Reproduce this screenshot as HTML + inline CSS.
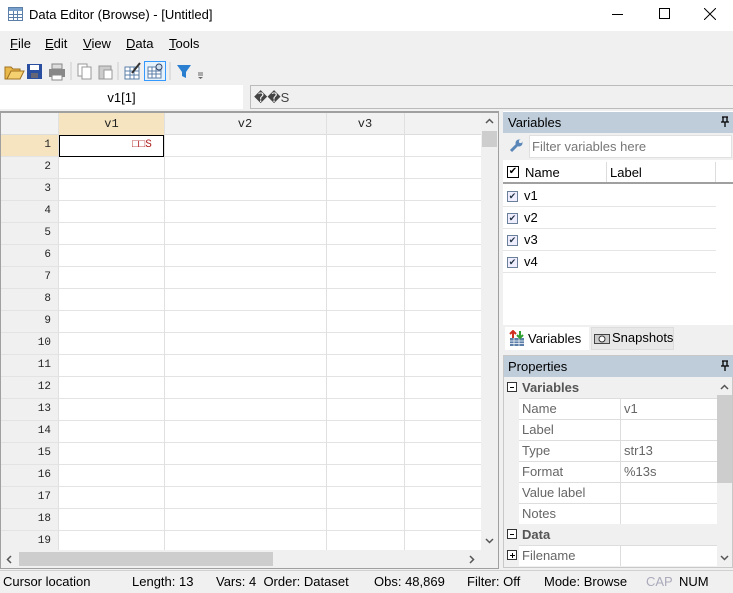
<!DOCTYPE html>
<html><head><style>
*{margin:0;padding:0;box-sizing:border-box}
body{width:733px;height:593px;background:#f0f0f0;font-family:"Liberation Sans","Noto Sans CJK SC",sans-serif;font-size:13px;color:#000;position:relative;overflow:hidden}
.a{position:absolute}
.mono{font-family:"Liberation Mono",monospace;font-size:12px}
</style></head><body>
<div class="a" style="left:0;top:0;width:733px;height:31px;background:#fff"></div>
<svg class="a" style="left:8px;top:7px" width="16" height="15"><rect x="0.5" y="0.5" width="14" height="13" fill="#fff" stroke="#5b7fa8"/><rect x="1" y="1" width="13" height="3" fill="#7aa0cc"/><path d="M1 7.5H14M1 10.5H14M5.5 4V14M9.5 4V14" stroke="#5b7fa8"/></svg>
<div class="a" style="left:29px;top:7px;font-size:13px">Data Editor (Browse) - [Untitled]</div>
<div class="a" style="left:612px;top:14px;width:11px;height:1px;background:#000"></div>
<div class="a" style="left:659px;top:8px;width:11px;height:11px;border:1px solid #000"></div>
<svg class="a" style="left:704px;top:8px" width="12" height="12"><path d="M0 0L12 12M12 0L0 12" stroke="#000"/></svg>
<div class="a" style="left:10px;top:36px"><u>F</u>ile</div>
<div class="a" style="left:45px;top:36px"><u>E</u>dit</div>
<div class="a" style="left:83px;top:36px"><u>V</u>iew</div>
<div class="a" style="left:126px;top:36px"><u>D</u>ata</div>
<div class="a" style="left:169px;top:36px"><u>T</u>ools</div>
<svg class="a" style="left:4px;top:61px" width="210" height="20">
<path d="M1 6h6l2 2h7v10H1z" fill="#e8b84a" stroke="#a07020"/><path d="M3 18l4-8h13l-4 8z" fill="#f5d070" stroke="#a07020"/>
<rect x="23" y="3" width="15" height="15" fill="#2a4fa0"/><rect x="26" y="4" width="9" height="5" fill="#fff"/><rect x="27" y="12" width="7" height="5" fill="#667"/>
<rect x="45" y="8" width="16" height="8" fill="#888"/><rect x="48" y="3" width="10" height="5" fill="#ddd" stroke="#888"/><rect x="48" y="14" width="10" height="5" fill="#fff" stroke="#888"/>
<path d="M67 1v18" stroke="#ccc"/>
<rect x="74" y="3" width="9" height="12" fill="#fff" stroke="#999"/><rect x="78" y="6" width="9" height="12" fill="#fff" stroke="#999"/>
<rect x="95" y="5" width="12" height="13" fill="#ccc" stroke="#999"/><rect x="100" y="9" width="8" height="9" fill="#fff" stroke="#999"/>
<path d="M114 1v18" stroke="#ccc"/>
<rect x="121" y="6" width="14" height="12" fill="#fff" stroke="#5b7fa8"/><path d="M121 10h14M121 14h14M126 6v12M130 6v12" stroke="#5b7fa8"/><path d="M128 12l8-10" stroke="#333" stroke-width="2"/>
<rect x="140.5" y="0.5" width="21" height="19" fill="#e5f1fb" stroke="#3399ff"/><rect x="144" y="6" width="13" height="11" fill="#fff" stroke="#5b7fa8"/><path d="M144 10h13M144 13h13M148 6v11M152 6v11" stroke="#5b7fa8"/><circle cx="155" cy="6" r="3" fill="#cde" stroke="#346"/>
<path d="M166 1v18" stroke="#ccc"/>
<path d="M173 4h14l-5 7v6l-4-2v-4z" fill="#2b7fd0"/>
<path d="M194 12h5M194 14h5" stroke="#666"/><path d="M194 16l2.5 2 2.5-2" fill="#666"/>
</svg>
<div class="a" style="left:0;top:85px;width:243px;height:24px;background:#fff"></div>
<div class="a" style="left:0;top:90px;width:243px;text-align:center">v1[1]</div>
<div class="a" style="left:250px;top:85px;width:483px;height:24px;background:#f0f0f0;border:1px solid #bbb;border-right:none"></div>
<div class="a" style="left:254px;top:90px;color:#444">��S</div>
<div class="a" style="left:0;top:111px;width:499px;height:458px;border:1px solid #a0a0a0;border-top:2px solid #a0a0a0;background:#fff"></div>
<div class="a" style="left:1px;top:113px;width:480px;height:22px;background:#f2f2f2;border-bottom:1px solid #ddd"></div>
<div class="a" style="left:59px;top:113px;width:105px;height:22px;background:#f6e4c0"></div>
<div class="a" style="left:1px;top:135px;width:57px;height:415px;background:#f0f0f0"></div>
<div class="a" style="left:1px;top:135px;width:57px;height:22px;background:#f6e4c0"></div>
<div id="g"></div>
<div class="a mono" style="left:59px;top:117px;width:105px;text-align:center;color:#222">v1</div>
<div class="a mono" style="left:164px;top:117px;width:162px;text-align:center;color:#222">v2</div>
<div class="a mono" style="left:326px;top:117px;width:78px;text-align:center;color:#222">v3</div>
<div class="a" style="left:59px;top:135px;width:105px;height:22px;border:1px solid #000"></div>
<div class="a mono" style="left:132px;top:139px;color:#b02020;font-size:11px">□□S</div>
<div class="a" style="left:481px;top:113px;width:17px;height:437px;background:#f0f0f0"></div>
<div class="a" style="left:482px;top:131px;width:15px;height:16px;background:#cdcdcd"></div>
<svg class="a" style="left:485px;top:118px" width="9" height="6"><path d="M1 5l3.5-3.5L8 5" stroke="#555" stroke-width="1.5" fill="none"/></svg>
<svg class="a" style="left:485px;top:538px" width="9" height="6"><path d="M1 1l3.5 3.5L8 1" stroke="#555" stroke-width="1.5" fill="none"/></svg>
<div class="a" style="left:1px;top:550px;width:497px;height:18px;background:#f0f0f0"></div>
<div class="a" style="left:19px;top:552px;width:254px;height:14px;background:#cdcdcd"></div>
<svg class="a" style="left:6px;top:555px" width="6" height="9"><path d="M5 1L1.5 4.5 5 8" stroke="#555" stroke-width="1.5" fill="none"/></svg>
<svg class="a" style="left:469px;top:555px" width="6" height="9"><path d="M1 1l3.5 3.5L1 8" stroke="#555" stroke-width="1.5" fill="none"/></svg>
<div class="a" style="left:503px;top:111px;width:230px;height:240px;background:#fff"></div>
<div class="a" style="left:503px;top:112px;width:230px;height:21px;background:#bfcddb"></div>
<div class="a" style="left:508px;top:115px">Variables</div>
<svg class="a" style="left:721px;top:116px" width="8" height="11"><path d="M1 1h6M2 1v5M6 1v5M0 6h8M4 6v5" stroke="#000" stroke-width="1.3" fill="none"/></svg>
<div class="a" style="left:503px;top:133px;width:230px;height:27px;background:#f0f0f0"></div>
<svg class="a" style="left:509px;top:139px" width="14" height="14"><path d="M2 12l6-6" stroke="#5a86b8" stroke-width="3"/><circle cx="10" cy="4" r="3.5" fill="#5a86b8"/><circle cx="11.5" cy="2.5" r="1.6" fill="#f0f0f0"/></svg>
<div class="a" style="left:529px;top:135px;width:203px;height:23px;background:#fff;border:1px solid #e0e0e0"></div>
<div class="a" style="left:532px;top:139px;color:#777">Filter variables here</div>
<div class="a" style="left:503px;top:161px;width:230px;height:23px;background:#fff;border-bottom:2px solid #a0a0a0"></div>
<div class="a" style="left:606px;top:162px;width:1px;height:20px;background:#ddd"></div>
<div class="a" style="left:715px;top:162px;width:1px;height:20px;background:#ddd"></div>
<div class="a" style="left:507px;top:166px;width:12px;height:12px;border:1px solid #000;font-size:10px;line-height:10px;text-align:center">&#10004;</div>
<div class="a" style="left:525px;top:165px">Name</div>
<div class="a" style="left:610px;top:165px">Label</div>
<div id="vr"></div>
<div class="a" style="left:503px;top:325px;width:230px;height:28px;background:#f0f0f0"></div>
<div class="a" style="left:505px;top:327px;width:84px;height:23px;background:#fff"></div>
<svg class="a" style="left:509px;top:330px" width="16" height="16"><rect x="1" y="8" width="14" height="8" fill="#5b7fa8"/><path d="M1 11h14M1 13.5h14M5 8v8M10 8v8" stroke="#fff" stroke-width=".7"/><path d="M4 8V2M1 4l3-3 3 3" stroke="#d03020" stroke-width="2" fill="none"/><path d="M11 1v6M8 5l3 3 3-3" stroke="#30a030" stroke-width="2" fill="none"/></svg>
<div class="a" style="left:528px;top:331px">Variables</div>
<div class="a" style="left:591px;top:327px;width:83px;height:23px;background:#e8e8e8;border:1px solid #ddd"></div>
<svg class="a" style="left:594px;top:332px" width="16" height="12"><rect x="0.5" y="2.5" width="15" height="9" fill="#ccc" stroke="#444"/><circle cx="8" cy="7" r="3" fill="#fff" stroke="#333"/></svg>
<div class="a" style="left:612px;top:330px">Snapshots</div>
<div class="a" style="left:503px;top:355px;width:230px;height:213px;background:#f0f0f0;border:1px solid #c8c8c8"></div>
<div class="a" style="left:504px;top:356px;width:229px;height:21px;background:#bfcddb"></div>
<div class="a" style="left:508px;top:359px">Properties</div>
<svg class="a" style="left:721px;top:360px" width="8" height="11"><path d="M1 1h6M2 1v5M6 1v5M0 6h8M4 6v5" stroke="#000" stroke-width="1.3" fill="none"/></svg>
<div class="a" style="left:507px;top:382px;width:10px;height:10px;border:1px solid #333;background:#fff"><div class="a" style="left:2px;top:3.5px;width:4px;height:1px;background:#000"></div></div>
<div class="a" style="left:522px;top:380px;font-weight:bold;color:#555">Variables</div>
<div id="pr"></div>
<div class="a" style="left:507px;top:529px;width:10px;height:10px;border:1px solid #333;background:#fff"><div class="a" style="left:2px;top:3.5px;width:4px;height:1px;background:#000"></div></div>
<div class="a" style="left:522px;top:527px;font-weight:bold;color:#555">Data</div>
<div class="a" style="left:507px;top:550px;width:10px;height:10px;border:1px solid #333;background:#fff"><div class="a" style="left:2px;top:3.5px;width:5px;height:1px;background:#000"></div><div class="a" style="left:4px;top:1.5px;width:1px;height:5px;background:#000"></div></div>
<div class="a" style="left:519px;top:545px;width:198px;height:21px;background:#fff;border-top:1px solid #ddd"></div>
<div class="a" style="left:620px;top:545px;width:1px;height:21px;background:#ddd"></div>
<div class="a" style="left:522px;top:548px;color:#666">Filename</div>
<div class="a" style="left:717px;top:377px;width:15px;height:190px;background:#f0f0f0"></div>
<div class="a" style="left:717px;top:395px;width:15px;height:88px;background:#cdcdcd"></div>
<svg class="a" style="left:720px;top:384px" width="9" height="6"><path d="M1 5l3.5-3.5L8 5" stroke="#555" stroke-width="1.5" fill="none"/></svg>
<svg class="a" style="left:720px;top:555px" width="9" height="6"><path d="M1 1l3.5 3.5L8 1" stroke="#555" stroke-width="1.5" fill="none"/></svg>
<div class="a" style="left:0;top:570px;width:733px;height:23px;background:#f0f0f0;border-top:1px solid #d0d0d0"></div>
<div class="a" style="left:3px;top:574px">Cursor location</div>
<div class="a" style="left:132px;top:574px">Length: 13</div>
<div class="a" style="left:216px;top:574px">Vars: 4&nbsp; Order: Dataset</div>
<div class="a" style="left:374px;top:574px">Obs: 48,869</div>
<div class="a" style="left:467px;top:574px">Filter: Off</div>
<div class="a" style="left:544px;top:574px">Mode: Browse</div>
<div class="a" style="left:646px;top:574px;color:#aab">CAP</div>
<div class="a" style="left:679px;top:574px">NUM</div>
<script>
var g='',i;
for(i=1;i<=19;i++){var y=135+(i-1)*22;
g+='<div class="a mono" style="left:1px;top:'+(y+4)+'px;width:50px;text-align:right;color:#222;font-size:11px">'+i+'</div>';
g+='<div class="a" style="left:1px;top:'+(y+21)+'px;width:480px;height:1px;background:#e3e3e3"></div>';}
[58,164,326,404].forEach(function(x){g+='<div class="a" style="left:'+x+'px;top:113px;width:1px;height:437px;background:#e0e0e0"></div>'});
document.getElementById('g').innerHTML=g;
var v='';
for(i=1;i<=4;i++){var y=185+(i-1)*22;
v+='<div class="a" style="left:507px;top:'+(y+6)+'px;width:11px;height:11px;border:1px solid #6a7f99;background:#eef;font-size:9px;line-height:9px;text-align:center;color:#234">&#10004;</div>';
v+='<div class="a" style="left:524px;top:'+(y+3)+'px">v'+i+'</div>';
v+='<div class="a" style="left:503px;top:'+(y+21)+'px;width:213px;height:1px;background:#e5e5e5"></div>';}
document.getElementById('vr').innerHTML=v;
var p='',L=[['Name','v1'],['Label',''],['Type','str13'],['Format','%13s'],['Value label',''],['Notes','']];
L.forEach(function(r,k){var y=398+k*21;
p+='<div class="a" style="left:519px;top:'+y+'px;width:198px;height:21px;background:#fff;border-top:1px solid #ddd"></div>';
p+='<div class="a" style="left:620px;top:'+y+'px;width:1px;height:21px;background:#ddd"></div>';
p+='<div class="a" style="left:522px;top:'+(y+3)+'px;color:#666">'+r[0]+'</div>';
p+='<div class="a" style="left:624px;top:'+(y+3)+'px;color:#666">'+r[1]+'</div>';});
document.getElementById('pr').innerHTML=p;
</script>
</body></html>
